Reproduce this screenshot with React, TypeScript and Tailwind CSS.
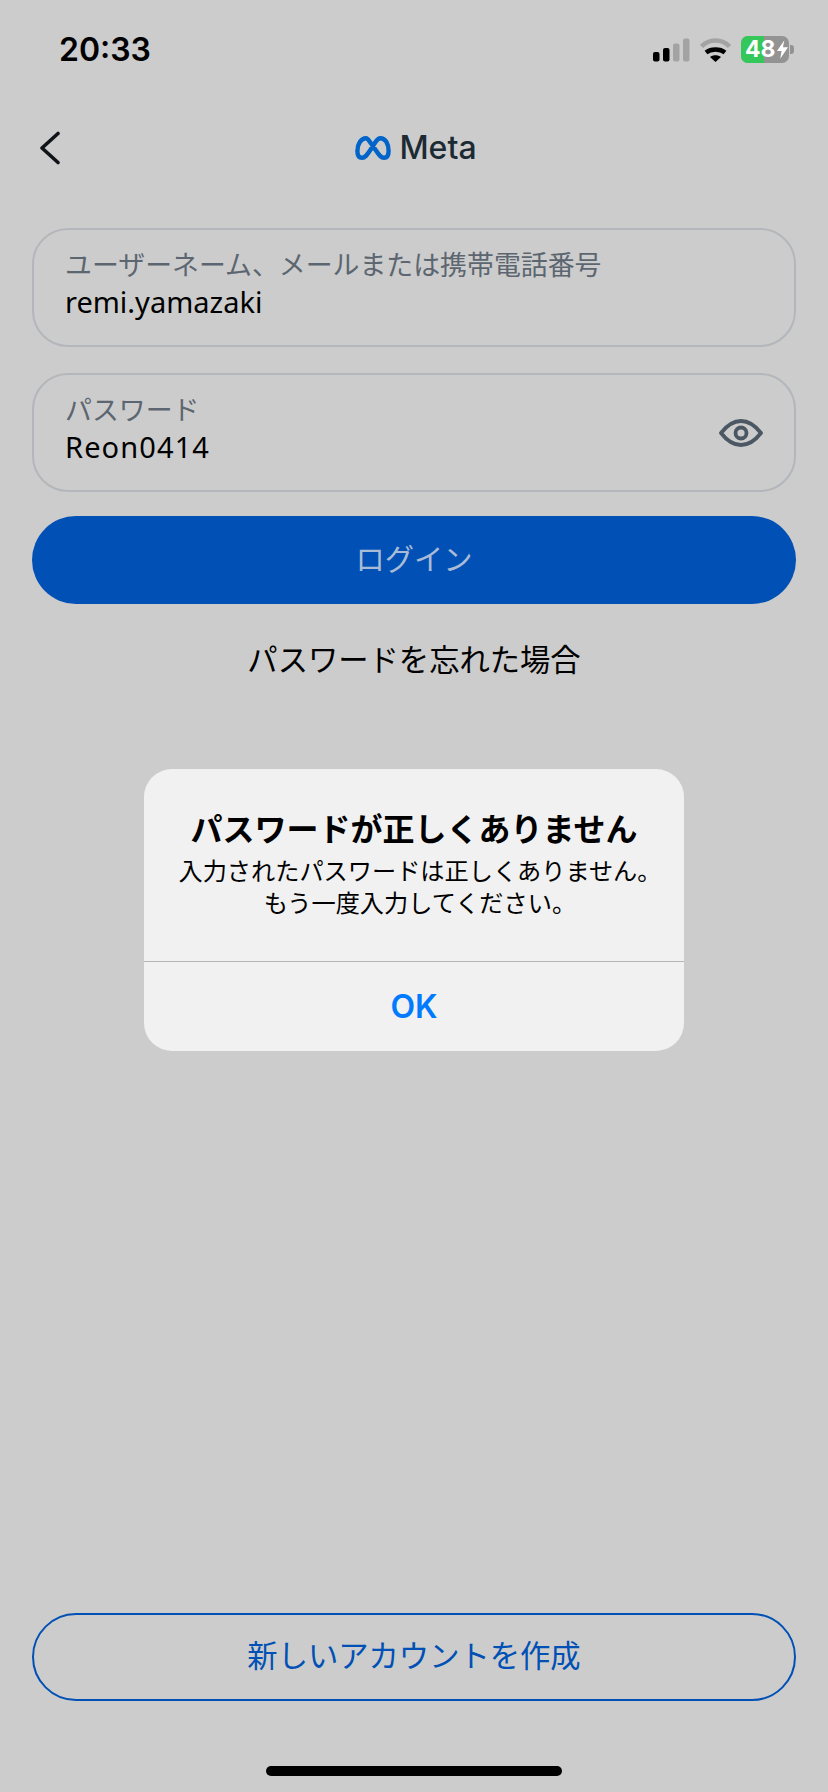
import React from 'react';

const jp = 'font-["Inter","Noto_Sans_CJK_JP",sans-serif]';

function StatusIcons() {
  return (
    <div className="flex items-center">
      {/* signal */}
      <svg width="40" height="24" viewBox="0 0 40 24" className="mr-[7px]">
        <rect x="0" y="14" width="6.5" height="9.5" rx="2" fill="#000" />
        <rect x="10" y="10" width="6.5" height="13.5" rx="2" fill="#000" />
        <rect x="20" y="5.5" width="6.5" height="18" rx="2" fill="#a3a3a3" />
        <rect x="30" y="0.5" width="6.5" height="23" rx="2" fill="#a3a3a3" />
      </svg>
      {/* wifi */}
      <svg width="32" height="24" viewBox="0 0 32 24" className="mr-[9px]">
        <path d="M1.5 8.5 C9 0.5 22 0.5 29.5 8.5" fill="none" stroke="#a3a3a3" strokeWidth="4.6" />
        <path d="M6 14.5 C11 10.5 20 10.5 25 14.5" fill="none" stroke="#000" strokeWidth="4.4" />
        <path d="M10 19 L15.5 24 L21 19 C18 16.8 13 16.8 10 19 Z" fill="#000" />
      </svg>
      {/* battery */}
      <div className="flex items-center">
        <div className="relative w-[48px] h-[27px] rounded-[7px] overflow-hidden bg-[#939393] flex">
          <div className="w-[23px] h-full bg-[#34c759]" />
          <div className="absolute inset-0 flex items-center pl-[4px] gap-[1px] text-white font-bold text-[23px] leading-none font-['Inter',sans-serif]">
            <span>48</span>
            <svg width="11" height="19" viewBox="0 0 12 20">
              <path d="M8 0 L0 11.5 H5 L3.5 20 L12 7.5 H6.5 Z" fill="#fff" />
            </svg>
          </div>
        </div>
        <div className="w-[4px] h-[9px] rounded-r-[3px] bg-[#939393] ml-[1px]" />
      </div>
    </div>
  );
}

function MetaLogo() {
  return (
    <div className="flex items-center gap-[8px] ml-[4px]">
      <svg width="36" height="24" viewBox="0 0 36 24">
        <path
          d="M11 2.2 C6 2.2 2.4 8 2.4 15 C2.4 19.5 4.2 21.8 7 21.8 C10 21.8 12 19 15 14.5 L20.5 6 C22 3.6 23.5 2.2 25.5 2.2 C30.5 2.2 33.6 8 33.6 15 C33.6 19.5 31.8 21.8 29 21.8 C26 21.8 24 19 21 14.5 L15 6 C13.5 3.6 12.5 2.2 11 2.2 Z"
          fill="none"
          stroke="#0064c8"
          strokeWidth="4.4"
        />
      </svg>
      <span className="font-['Inter',sans-serif] text-[32px] leading-none font-medium text-[#1c2b33]">Meta</span>
    </div>
  );
}

function Field({ label, value, eye }: { label: string; value: string; eye?: boolean }) {
  return (
    <div className="h-[119px] rounded-[36px] border-2 border-[#b3b6ba] pl-[31px] pr-[31px] flex items-center justify-between">
      <div className="flex flex-col pb-[6px]">
        <span className="text-[26.9px] leading-[34px] text-[#5c6670]">{label}</span>
        {eye ? (
          <span className="font-['Noto_Sans',sans-serif] text-[29px] leading-[40px] tracking-[1.1px] text-black">{value}</span>
        ) : (
          <span className="font-['Noto_Sans',sans-serif] text-[29px] leading-[40px] text-black">{value}</span>
        )}
      </div>
      {eye && (
        <svg width="44" height="28" viewBox="0 0 44 28">
          <path d="M2 14 C9 5 15 2 22 2 C29 2 35 5 42 14 C35 23 29 26 22 26 C15 26 9 23 2 14 Z" fill="none" stroke="#4b5863" strokeWidth="3.8" strokeLinejoin="round" />
          <circle cx="22" cy="14" r="5.5" fill="none" stroke="#4b5863" strokeWidth="3.8" />
        </svg>
      )}
    </div>
  );
}

export default function App() {
  return (
    <div className={`relative w-[828px] h-[1792px] overflow-hidden bg-[#cccccc] flex flex-col ${jp}`}>
      {/* Status bar */}
      <div className="h-[100px] pl-[59px] pr-[34px] pt-[32px] flex justify-between items-start">
        <span className="text-[32px] leading-[36px] font-semibold text-black font-['Inter',sans-serif]">20:33</span>
        <div className="pt-[4px]"><StatusIcons /></div>
      </div>

      {/* Nav */}
      <div className="relative h-[96px] flex items-center justify-center">
        <svg width="24" height="34" viewBox="0 0 24 34" className="absolute left-[38px] top-[31px]">
          <path d="M20 2.5 L4 17 L20 31.5" fill="none" stroke="#101418" strokeWidth="3.6" strokeLinecap="round" strokeLinejoin="round" />
        </svg>
        <MetaLogo />
      </div>

      {/* Form */}
      <div className="flex-1 flex flex-col px-[32px] pt-[32px]">
        <div className="flex flex-col gap-[26px]">
          <Field label="ユーザーネーム、メールまたは携帯電話番号" value="remi.yamazaki" />
          <Field label="パスワード" value="Reon0414" eye />
        </div>
        <button className="mt-[24px] h-[88px] rounded-full bg-[#0050b5] text-[#a9bcd6] text-[29.3px]">ログイン</button>
        <div className="mt-[36px] text-center text-[30.3px] leading-[40px] text-black">パスワードを忘れた場合</div>
        <div className="flex-1" />
        <button className="h-[88px] rounded-full border-2 border-[#0050b5] text-[#0050b5] text-[30.3px]">新しいアカウントを作成</button>
        <div className="h-[91px] flex justify-center items-start pt-[65px]">
          <div className="w-[296px] h-[10px] rounded-full bg-black" />
        </div>
      </div>

      {/* Alert */}
      <div className="absolute left-[144px] top-[769px] w-[540px] h-[282px] rounded-[28px] bg-[#f1f1f1] flex flex-col">
        <div className="h-[193px] border-b border-[#b5b5b5] flex flex-col items-center pt-[38px]">
          <div className="text-[32px] leading-[46px] font-bold text-black whitespace-nowrap">パスワードが正しくありません</div>
          <div className="text-[24.2px] leading-[32px] text-black text-center mt-[3px] whitespace-nowrap">
            <div>入力されたパスワードは正しくありません<span className="mr-[-12px]">。</span></div>
            <div>もう一度入力してください<span className="mr-[-12px]">。</span></div>
          </div>
        </div>
        <div className="flex-1 flex items-center justify-center text-[32px] font-semibold text-[#007aff] font-['Inter',sans-serif]">OK</div>
      </div>
    </div>
  );
}
